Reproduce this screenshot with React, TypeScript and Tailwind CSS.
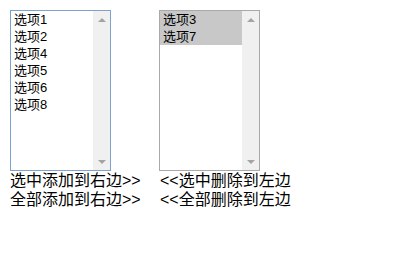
import React from 'react'

const font = { fontFamily: '"Liberation Sans", "Noto Sans CJK SC", sans-serif' }

function ListBox({
  items,
  selected,
  focused,
  onToggle,
}: {
  items: string[]
  selected: string[]
  focused?: boolean
  onToggle: (item: string) => void
}) {
  return (
    <div
      className={`flex w-[101px] h-[161px] border bg-white ${
        focused ? 'border-[#7da2ce]' : 'border-[#a9a9a9]'
      }`}
    >
      <div className="flex-1 flex flex-col">
        {items.map((item) => (
          <div
            key={item}
            onClick={() => onToggle(item)}
            className={`h-[17px] pl-[3px] text-[13px] leading-[17px] text-black cursor-default ${
              selected.includes(item) ? 'bg-[#c8c8c8]' : ''
            }`}
          >
            {item}
          </div>
        ))}
      </div>
      {/* fake scrollbar */}
      <div className="w-[17px] bg-[#f0f0f0] flex flex-col justify-between">
        <div className="h-[17px] flex items-center justify-center">
          <div className="w-0 h-0 border-l-[4px] border-r-[4px] border-b-[4px] border-l-transparent border-r-transparent border-b-[#a3a3a3]" />
        </div>
        <div className="h-[17px] flex items-center justify-center">
          <div className="w-0 h-0 border-l-[4px] border-r-[4px] border-t-[4px] border-l-transparent border-r-transparent border-t-[#a3a3a3]" />
        </div>
      </div>
    </div>
  )
}

export default function App() {
  const [left, setLeft] = React.useState(['选项1', '选项2', '选项4', '选项5', '选项6', '选项8'])
  const [right, setRight] = React.useState(['选项3', '选项7'])
  const [leftSel, setLeftSel] = React.useState<string[]>([])
  const [rightSel, setRightSel] = React.useState<string[]>(['选项3', '选项7'])

  const sortItems = (arr: string[]) => [...arr].sort()

  const toggle = (sel: string[], setSel: (s: string[]) => void) => (item: string) =>
    setSel(sel.includes(item) ? sel.filter((s) => s !== item) : [...sel, item])

  const moveRight = (items: string[]) => {
    setRight(sortItems([...right, ...items]))
    setLeft(left.filter((i) => !items.includes(i)))
    setLeftSel([])
  }
  const moveLeft = (items: string[]) => {
    setLeft(sortItems([...left, ...items]))
    setRight(right.filter((i) => !items.includes(i)))
    setRightSel([])
  }

  return (
    <div className="flex pl-[10px] pt-[10px] bg-white" style={font}>
      <div className="w-[149px] flex flex-col">
        <ListBox items={left} selected={leftSel} focused onToggle={toggle(leftSel, setLeftSel)} />
        <div className="text-[16px] leading-[19px] text-black">
          <div className="cursor-pointer" onClick={() => moveRight(leftSel)}>
            选中添加到右边&gt;&gt;
          </div>
          <div className="cursor-pointer" onClick={() => moveRight(left)}>
            全部添加到右边&gt;&gt;
          </div>
        </div>
      </div>
      <div className="flex flex-col">
        <ListBox items={right} selected={rightSel} onToggle={toggle(rightSel, setRightSel)} />
        <div className="text-[16px] leading-[19px] text-black pl-px">
          <div className="cursor-pointer" onClick={() => moveLeft(rightSel)}>
            &lt;&lt;选中删除到左边
          </div>
          <div className="cursor-pointer" onClick={() => moveLeft(right)}>
            &lt;&lt;全部删除到左边
          </div>
        </div>
      </div>
    </div>
  )
}
